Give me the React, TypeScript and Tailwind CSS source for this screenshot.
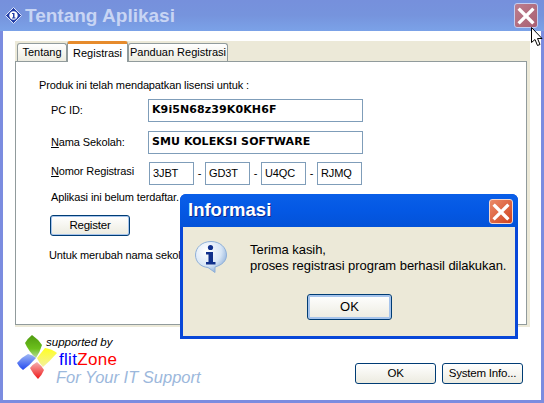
function XpButton({ label, className }: { label: string; className: string }) {
  return (
    <button className={`flex items-center justify-center rounded-[3px] border border-[#003c74] bg-gradient-to-b from-white to-[#ecebe0] text-[11.5px] tracking-[-0.2px] text-black ${className}`}>
      {label}
    </button>
  );
}

function TextBox({ value, className }: { value: string; className: string }) {
  return (
    <div className={`flex items-center border border-[#7f9db9] bg-white ${className}`}>{value}</div>
  );
}

function CloseIcon({ className }: { className: string }) {
  return (
    <svg viewBox="0 0 16 16" className={className}>
      <path d="M3 3 13 13M13 3 3 13" stroke="white" strokeWidth="2.6" strokeLinecap="square" fill="none" />
    </svg>
  );
}

function Dialog() {
  return (
    <div className="absolute left-[180px] top-[194px] flex h-[145px] w-[338px] flex-col overflow-hidden rounded-t-[6px] bg-[#0847d8]">
      <div className="flex h-[33px] shrink-0 items-center justify-between bg-gradient-to-b from-[#0a5fe8] via-[#0458e4] to-[#0352d8] pl-[8px] pr-[5px]">
        <span className="text-[18.5px] leading-none font-bold text-white [text-shadow:1px_1px_0_#0a2a90]">Informasi</span>
        <div className="mt-[2px] flex h-[25px] w-[24px] items-center justify-center rounded-[3px] border border-[#f6d8cc] bg-gradient-to-br from-[#ea8a68] to-[#d0401a]">
          <CloseIcon className="h-[20px] w-[20px]" />
        </div>
      </div>
      <div className="mx-[3px] mb-[3px] flex min-h-0 flex-1 flex-col bg-[#ece9d8]">
        <div className="flex pl-[12px] pt-[14px]">
          <svg viewBox="0 0 32 32" className="h-[32px] w-[32px] shrink-0">
            <defs>
              <radialGradient id="infoBubble" cx="0.35" cy="0.3" r="0.8">
                <stop offset="0" stopColor="#ffffff" />
                <stop offset="0.6" stopColor="#d8e6f6" />
                <stop offset="1" stopColor="#7fa4d4" />
              </radialGradient>
            </defs>
            <path d="M16 0.5C7 0.5 0.5 6.5 0.5 14 0.5 21 6 26 13 26.5L20 31.5 20 26C27 24 31.5 20 31.5 14 31.5 6.5 25 0.5 16 0.5Z" fill="url(#infoBubble)" stroke="#8fb0d8" />
            <circle cx="15.5" cy="6.5" r="2.6" fill="#10308c" />
            <path d="M11 11H18V21H20.5V23.5H11V21H13.5V13.5H11Z" fill="#10308c" />
          </svg>
          <p className="ml-[23px] mt-[1px] whitespace-nowrap text-[13px] leading-[16px] tracking-[-0.05px] text-black">
            Terima kasih,
            <br />
            proses registrasi program berhasil dilakukan.
          </p>
        </div>
        <div className="mt-[20px] flex justify-center pl-[1px]">
          <button className="flex h-[26px] w-[85px] items-center justify-center rounded-[3px] border border-[#003c74] bg-gradient-to-b from-white to-[#ecebe0] text-[13px] text-black shadow-[inset_0_0_0_2px_#a6c4ec]">
            OK
          </button>
        </div>
      </div>
    </div>
  );
}

function Logo() {
  return (
    <div className="ml-[14px] mt-[7px] flex">
      <svg viewBox="0 0 40 46" className="h-[46px] w-[40px] shrink-0">
        <defs>
          <linearGradient id="leafGreen" x1="0" y1="0" x2="0" y2="1">
            <stop offset="0" stopColor="#4f9a10" />
            <stop offset="0.6" stopColor="#6cc01c" />
            <stop offset="1" stopColor="#b8dca0" />
          </linearGradient>
          <linearGradient id="leafYellow" x1="0" y1="0" x2="0" y2="1">
            <stop offset="0" stopColor="#ffff20" />
            <stop offset="1" stopColor="#f4f0a0" />
          </linearGradient>
          <linearGradient id="leafBlue" x1="0" y1="0" x2="0" y2="1">
            <stop offset="0" stopColor="#a0b8f4" />
            <stop offset="1" stopColor="#2048f0" />
          </linearGradient>
          <linearGradient id="leafRed" x1="0" y1="0" x2="0" y2="1">
            <stop offset="0" stopColor="#f4b0b0" />
            <stop offset="1" stopColor="#f01818" />
          </linearGradient>
        </defs>
        <path d="M15 1Q21 5 25 11 23 18 19 24 12 18 8 9 11 4 15 1Z" fill="url(#leafGreen)" />
        <path d="M28 14Q35 15 40 19 33 27 26 33 22 29 20 24 24 19 28 14Z" fill="url(#leafYellow)" />
        <path d="M0 29Q5 23 11 20 16 21 19 24 13 31 6 36 2 33 0 29Z" fill="url(#leafBlue)" />
        <path d="M13 34Q16 30 20 28 24 31 27 36 25 41 21 45 16 40 13 34Z" fill="url(#leafRed)" />
      </svg>
      <div className="flex flex-col pt-[2px]">
        <span className="ml-[-11px] text-[11.5px] leading-[12px] italic whitespace-nowrap text-black">supported by</span>
        <span className="ml-[2px] mt-[4px] text-[17px] leading-[16px] tracking-[0.3px]">
          <span className="text-[#0000ff]">flit</span>
          <span className="text-[#ff0000]">Zone</span>
        </span>
        <span className="ml-[-1px] mt-[1px] text-[16.5px] leading-[17px] italic whitespace-nowrap text-[#9cb8dc]">For Your IT Support</span>
      </div>
    </div>
  );
}

export default function App() {
  return (
    <div className="relative flex h-[403px] w-[544px] flex-col overflow-hidden bg-[#7b8ce0] font-['Liberation_Sans',Arial,sans-serif]">
      <div className="flex h-[31px] shrink-0 items-center justify-between bg-gradient-to-b from-[#7690dc] via-[#7694dd] to-[#7ba2e8] pl-[5px] pr-[6px]">
        <div className="flex items-center gap-[3px]">
          <svg viewBox="0 0 17 17" className="h-[17px] w-[17px]">
            <path d="M8.5 0.5 16.5 8.5 8.5 16.5 0.5 8.5Z" fill="#2540a8" stroke="#dfe6fa" />
            <circle cx="8.5" cy="8.5" r="4.2" fill="#ffffff" />
            <path d="M7 6H9.5V10.5H10.5V11.5H7V10.5H8V7H7Z" fill="#2540a8" />
          </svg>
          <span className="text-[19px] leading-none font-bold text-[#c8d5f4]">Tentang Aplikasi</span>
        </div>
        <div className="flex h-[25px] w-[24px] items-center justify-center rounded-[3px] border border-[#c4cdf0] bg-gradient-to-br from-[#bd7e8e] to-[#a85f72]">
          <CloseIcon className="h-[20px] w-[20px]" />
        </div>
      </div>

      <div className="mx-[3px] mb-[3px] flex min-h-0 flex-1 flex-col bg-white">
        <div className="ml-[12px] mr-[11px] mt-[10px] h-[286px] shrink-0 bg-[#ece9d8] pb-[2px] pr-[3px]">
          <div className="flex h-[20px] items-end whitespace-nowrap pl-[2px] text-[11px] text-black">
            <div className="flex h-[18px] w-[50px] items-center justify-center rounded-t-[3px] border border-b-0 border-[#919b9c] bg-gradient-to-b from-white to-[#ecebe0]">Tentang</div>
            <div className="relative z-10 mb-[-1px] flex h-[21px] w-[61px] items-center justify-center rounded-t-[3px] border-x border-t-[3px] border-x-[#919b9c] border-t-[#e68b2c] bg-white">Registrasi</div>
            <div className="flex h-[18px] w-[100px] items-center justify-center rounded-t-[3px] border border-b-0 border-[#919b9c] bg-gradient-to-b from-white to-[#ecebe0]">Panduan Registrasi</div>
          </div>
          <div className="flex h-[264px] flex-col border border-[#919b9c] bg-white pl-[23px] text-[11px] tracking-[-0.12px] text-black">
            <p className="mt-[16px] leading-[14px]">Produk ini telah mendapatkan lisensi untuk :</p>
            <div className="mt-[7px] flex h-[23px] items-center">
              <span className="ml-[12px] w-[97px]">PC ID:</span>
              <TextBox value="K9i5N68z39K0KH6F" className="h-[23px] w-[215px] pl-[3px] font-['DejaVu_Sans',sans-serif] text-[11px] font-bold tracking-[0.1px]" />
            </div>
            <div className="mt-[9px] flex h-[23px] items-center">
              <span className="ml-[12px] w-[97px]"><u>N</u>ama Sekolah:</span>
              <TextBox value="SMU KOLEKSI SOFTWARE" className="h-[23px] w-[215px] pl-[3px] font-['DejaVu_Sans',sans-serif] text-[11px] font-bold tracking-[0.1px]" />
            </div>
            <div className="mt-[8px] flex h-[23px] items-center">
              <span className="mb-[5px] ml-[12px] w-[98px]"><u>N</u>omor Registrasi</span>
              <TextBox value="3JBT" className="h-[23px] w-[45px] pl-[3px]" />
              <span className="w-[11px] text-center">-</span>
              <TextBox value="GD3T" className="h-[23px] w-[45px] pl-[3px]" />
              <span className="w-[11px] text-center">-</span>
              <TextBox value="U4QC" className="h-[23px] w-[45px] pl-[3px]" />
              <span className="w-[11px] text-center">-</span>
              <TextBox value="RJMQ" className="h-[23px] w-[45px] pl-[3px]" />
            </div>
            <p className="ml-[12px] mt-[5px] leading-[14px]">Aplikasi ini belum terdaftar.</p>
            <XpButton label="Register" className="ml-[11px] mt-[11px] h-[21px] w-[80px] shadow-[inset_0_0_0_1px_#a6c4ec]" />
            <p className="ml-[10px] mt-[12px] leading-[14px]">Untuk merubah nama sekolah</p>
          </div>
        </div>

        <div className="flex min-h-0 flex-1 items-start justify-between">
          <Logo />
          <div className="mr-[18px] mt-[36px] flex gap-[6px]">
            <XpButton label="OK" className="h-[21px] w-[81px]" />
            <XpButton label="System Info..." className="h-[21px] w-[81px]" />
          </div>
        </div>
      </div>

      <Dialog />

      <svg viewBox="0 0 12 20" className="absolute left-[531px] top-[27px] h-[20px] w-[12px]">
        <path d="M0.5 0.5V15.5L4 12.5 6.5 18.5 9 17.5 6.5 11.5H11Z" fill="white" stroke="black" />
      </svg>
    </div>
  );
}
